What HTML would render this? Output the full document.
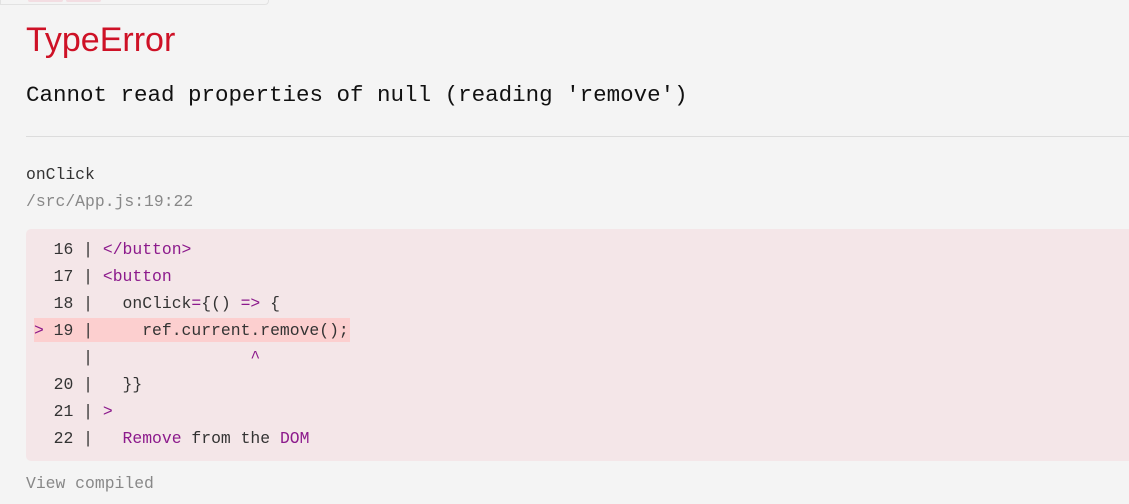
<!DOCTYPE html>
<html><head><meta charset="utf-8"><style>
html,body{margin:0;padding:0}
body{width:1129px;height:504px;background:#f4f4f4;position:relative;overflow:hidden;font-family:"Liberation Mono",monospace}
.abs{position:absolute;white-space:pre}
.m{font-family:"Liberation Mono",monospace;font-size:16.4px;line-height:27px}
.p{color:#8c1a8c}
.t{color:#333}
</style></head><body>
<div class="abs" style="left:0;top:0;width:267px;height:4px;border:1px solid #e2e2e2;border-top:none;border-radius:0 0 4px 0;"></div>
<div class="abs" style="left:28px;top:0;width:35px;height:2px;background:#f3dde2;border-radius:0 0 3px 3px"></div>
<div class="abs" style="left:66px;top:0;width:35px;height:2px;background:#f3dde2;border-radius:0 0 3px 3px"></div>
<div class="abs" style="left:26px;top:18px;font-family:'Liberation Sans',sans-serif;font-size:34px;color:#ce1126;line-height:44px">TypeError</div>
<div class="abs" style="left:26px;top:80px;font-size:22.5px;line-height:30px;color:#111">Cannot read properties of null (reading 'remove')</div>
<div class="abs" style="left:26px;top:136px;width:1103px;height:1px;background:#dcdcdc"></div>
<div class="abs m t" style="left:26px;top:161px">onClick</div>
<div class="abs m" style="left:26px;top:188px;color:#888">/src/App.js:19:22</div>
<div class="abs" style="left:26px;top:229px;width:1110px;height:232px;background:#f4e6e8;border-radius:5px"></div>
<div class="abs" style="left:34px;top:318px;width:316px;height:24px;background:#fccfcf"></div>
<div class="abs m t" style="left:34px;top:236px">  16 | <span class="p">&lt;/button&gt;</span>
  17 | <span class="p">&lt;button</span>
  18 |   onClick<span class="p">=</span>{() <span class="p">=&gt;</span> {
<span class="p">&gt;</span> 19 |     ref.current.remove();
     |                <span class="p">^</span>
  20 |   }}
  21 | <span class="p">&gt;</span>
  22 |   <span class="p">Remove</span> from the <span class="p">DOM</span></div>
<div class="abs m" style="left:26px;top:470px;color:#888">View compiled</div>
</body></html>
